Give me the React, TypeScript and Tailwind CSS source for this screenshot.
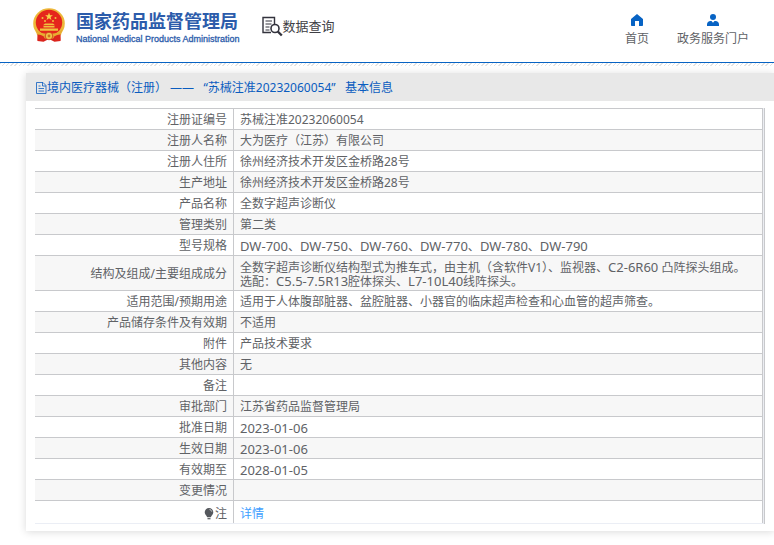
import { Fragment } from "react";

type Row = { label: string; lines: string[] };

const rows: Row[] = [
  { label: "注册证编号", lines: ["苏械注准20232060054"] },
  { label: "注册人名称", lines: ["大为医疗（江苏）有限公司"] },
  { label: "注册人住所", lines: ["徐州经济技术开发区金桥路28号"] },
  { label: "生产地址", lines: ["徐州经济技术开发区金桥路28号"] },
  { label: "产品名称", lines: ["全数字超声诊断仪"] },
  { label: "管理类别", lines: ["第二类"] },
  { label: "型号规格", lines: ["DW-700、DW-750、DW-760、DW-770、DW-780、DW-790"] },
  {
    label: "结构及组成/主要组成成分",
    lines: [
      "全数字超声诊断仪结构型式为推车式，由主机（含软件V1）、监视器、C2-6R60 凸阵探头组成。",
      "选配：C5.5-7.5R13腔体探头、L7-10L40线阵探头。",
    ],
  },
  { label: "适用范围/预期用途", lines: ["适用于人体腹部脏器、盆腔脏器、小器官的临床超声检查和心血管的超声筛查。"] },
  { label: "产品储存条件及有效期", lines: ["不适用"] },
  { label: "附件", lines: ["产品技术要求"] },
  { label: "其他内容", lines: ["无"] },
  { label: "备注", lines: [] },
  { label: "审批部门", lines: ["江苏省药品监督管理局"] },
  { label: "批准日期", lines: ["2023-01-06"] },
  { label: "生效日期", lines: ["2023-01-06"] },
  { label: "有效期至", lines: ["2028-01-05"] },
  { label: "变更情况", lines: [] },
];

// Model codes and dates are set one size larger than the hanzi around them
const Codes = ({ text }: { text: string }) => (
  <>
    {text.split(/([A-Z0-9.]+(?:-[A-Z0-9.]+)+)/).map((part, i) =>
      i % 2 ? <span key={i} className="text-[13px]">{part}</span> : <Fragment key={i}>{part}</Fragment>
    )}
  </>
);

const Emblem = () => (
  <svg viewBox="0 0 32 35" className="h-[35px] w-8 shrink-0" aria-hidden="true">
    <path d="M5 25L4.500 33l6 .8L16 31l5.500 2.800 6-.8L27 25z" fill="#d9231c" />
    <ellipse cx="16" cy="15.500" rx="15.800" ry="15.300" fill="#edb93a" />
    <ellipse cx="16" cy="14.500" rx="13.200" ry="12.800" fill="#e5261c" />
    <path d="M16 4.500l1 2.700 2.900.1-2.300 1.800.8 2.800-2.400-1.600-2.400 1.600.8-2.800-2.300-1.800 2.900-.1z" fill="#f6d34a" />
    <g fill="#f0c23f">
      <circle cx="9.500" cy="10" r="1" />
      <circle cx="12" cy="13" r="1" />
      <circle cx="20" cy="13" r="1" />
      <circle cx="22.500" cy="10" r="1" />
      <path d="M12 15.500h8l2 1.800H10zM10.500 18h11v1.600h-11zM7 20.500h18v2.200H7z" />
    </g>
    <path d="M2.500 21c3 3.500 7.500 4.800 13.500 4.800s10.500-1.300 13.500-4.800L28 27c-3 2.500-7 3.500-12 3.500S7 29.500 4 27z" fill="#e7ad31" />
    <path d="M4.500 26.500c3 0 5 1 7 2.500l-2 4-5-.5zM27.500 26.500c-3 0-5 1-7 2.500l2 4 5-.5z" fill="#dc261d" />
    <circle cx="16" cy="28" r="3.800" fill="#efc347" stroke="#d0301c" strokeWidth=".8" />
    <circle cx="16" cy="28" r="1.400" fill="#d0701f" />
  </svg>
);

const SearchDocIcon = () => (
  <svg viewBox="0 0 21 21" className="h-[21px] w-[21px] shrink-0" fill="none" stroke="#33333d" aria-hidden="true">
    <path d="M12.5 8V1.5H1v15h8" strokeWidth="1.4" />
    <path d="M3.5 5h6.5M3.5 8h6M3.5 11h4M3.5 14h4" strokeWidth="1" />
    <circle cx="13" cy="12.5" r="4" strokeWidth="1.6" />
    <path d="M15.8 15.5l4 4" strokeWidth="2.4" />
  </svg>
);

const HomeIcon = () => (
  <svg viewBox="0 0 12 12" className="h-3 w-3" fill="#0763c4" aria-hidden="true">
    <path d="M6 0l6 5v6.2c0 .5-.3.8-.8.8H8V7H4v5H.8c-.5 0-.8-.3-.8-.8V5z" />
  </svg>
);

const PersonIcon = () => (
  <svg viewBox="0 0 12 12" className="h-3 w-3" fill="#0763c4" aria-hidden="true">
    <circle cx="6" cy="3" r="3" />
    <path d="M0 12v-1.500C0 8.500 1.500 7 3.500 7h1L6 8.800 7.500 7h1c2 0 3.500 1.500 3.500 3.500V12z" />
  </svg>
);

const FileIcon = () => (
  <svg viewBox="0 0 11 12" className="h-3 w-[11px] shrink-0" fill="none" stroke="#0a5cbf" aria-hidden="true">
    <path d="M.5.500h6.500l3 3v8H.500zM6.500.500v3.500h3.500M2.500 6.500h5.500M2.500 9h5.500M2.500 4h2" strokeWidth=".8" />
  </svg>
);

const BulbIcon = () => (
  <svg viewBox="0 0 10 12" className="h-3 w-2.5" aria-hidden="true">
    <path d="M5 0a4.300 4.300 0 0 0-4.300 4.300c0 2 1.500 3 2.500 4.900h3.600c1-1.900 2.500-2.900 2.500-4.900A4.300 4.300 0 0 0 5 0z" fill="#55585d" />
    <path d="M3.500 10.700h3" stroke="#55585d" strokeWidth="1.200" />
    <path d="M5.500 1.600c1.300.1 2 .9 2.200 2" stroke="#fff" strokeWidth=".7" fill="none" />
  </svg>
);

const labelCell = "w-[199px] border-r border-[#c8c9cc] pr-1.5 text-right font-normal";
const valueCell = "border-r border-[#c8c9cc] px-1.5";

export default function App() {
  return (
    <div className="min-h-screen overflow-x-hidden bg-white font-['Noto_Sans','Noto_Sans_CJK_SC',sans-serif] text-xs text-[#606266]">
      <header className="flex h-[63px] items-start justify-between border-b border-[#0763c4] pr-[25px] pl-[33px]">
        <div className="flex pt-2">
          <Emblem />
          <div className="ml-[11px] pt-0.5 text-[#2c5cab]">
            <h1 className="text-[18px] leading-[22px] font-bold whitespace-nowrap">国家药品监督管理局</h1>
            <p className="font-['Liberation_Sans',sans-serif] text-[9px] leading-[14px] whitespace-nowrap [-webkit-text-stroke:0.3px]">
              National Medical Products Administration
            </p>
          </div>
          <div className="ml-[22px] flex items-start pt-2">
            <SearchDocIcon />
            <span className="text-[13px] leading-5 whitespace-nowrap text-[#3f3f45]">数据查询</span>
          </div>
        </div>
        <nav className="flex gap-7 pt-3.5 leading-4">
          <a href="#" className="flex flex-col items-center gap-[5px]">
            <HomeIcon />
            首页
          </a>
          <a href="#" className="flex flex-col items-center gap-[5px]">
            <PersonIcon />
            政务服务门户
          </a>
        </nav>
      </header>
      <div className="h-[3px] bg-[repeating-linear-gradient(135deg,#e3e3e3_0,#e3e3e3_1px,#fff_1px,#fff_3px)]" />

      <main className="mt-[7px] ml-[26px] bg-white shadow-[0_1px_8px_rgba(0,0,0,0.15)]">
        <h2 className="flex h-7 items-center bg-[#e8e8e8] px-2.5 pt-0.5 text-[#0a5cbf]">
          <FileIcon />
          <span className="whitespace-pre">境内医疗器械（注册） ——   “苏械注准20232060054”   基本信息</span>
        </h2>
        <div className="px-[9px] py-[7px]">
          <div className="border-r border-[#c8c9cc] bg-[#ebedf2] pr-px">
            <table className="w-full border-separate border-spacing-0 border-t border-[#c8c9cc] bg-white leading-[14px]">
              <tbody>
                {rows.map(({ label, lines }, i) => (
                  <tr key={i} className="h-[21px] even:bg-[#f7f7f7]">
                    <th scope="row" className={`${labelCell} border-b pt-1 pb-0.5`}>{label}</th>
                    <td className={`${valueCell} border-b pt-1 pb-0.5`}>
                      {lines.map((line) => (
                        <div key={line} className="h-3.5"><Codes text={line} /></div>
                      ))}
                    </td>
                  </tr>
                ))}
                <tr className="h-[22px]">
                  <th scope="row" className={`${labelCell} pt-1`}>
                    <span className="flex items-center justify-end gap-px">
                      <BulbIcon />注
                    </span>
                  </th>
                  <td className={`${valueCell} pt-1`}>
                    <a href="#" className="text-[#409eff]">详情</a>
                  </td>
                </tr>
              </tbody>
            </table>
            <div className="h-px bg-[#ebeef5]" />
          </div>
        </div>
      </main>
    </div>
  );
}
